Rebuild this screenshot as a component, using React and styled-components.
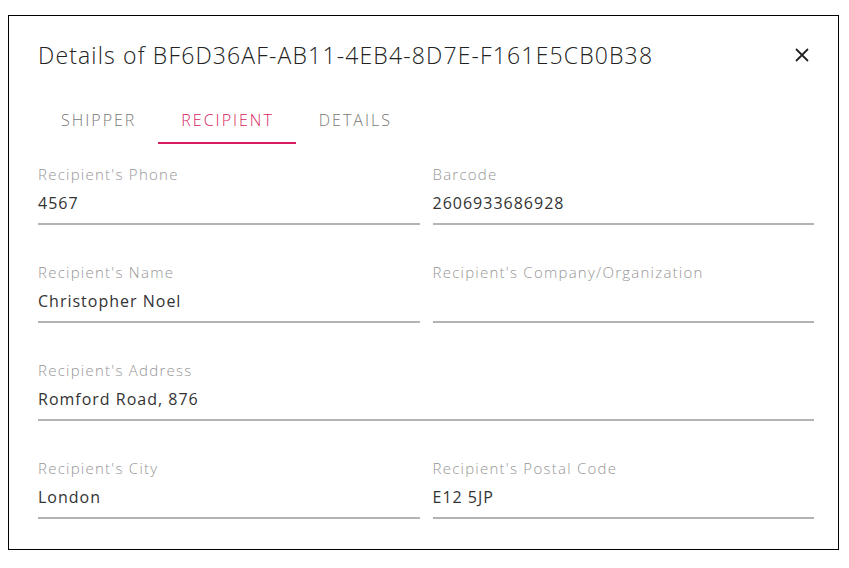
import React from "react";
import styled, { createGlobalStyle } from "styled-components";

const Global = createGlobalStyle`
  html, body { margin: 0; padding: 0; background: #fff; }
  body { padding: 15px 0 0 8px; font-family: "Open Sans", "Noto Sans", sans-serif; }
  * { box-sizing: border-box; }
`;

const Dialog = styled.div`
  width: 831px;
  height: 535px;
  border: 1px solid #000;
  background: #fff;
  padding: 21px 24px 0 29px;
  display: flex;
  flex-direction: column;
`;

const Header = styled.div`
  display: flex;
  align-items: center;
  justify-content: space-between;
  height: 36px;
`;

const Title = styled.h2`
  margin: 0;
  font-size: 23px;
  font-weight: 300;
  color: #222;
  letter-spacing: 1.15px;
`;

const Close = styled.button`
  border: 0;
  background: none;
  padding: 0;
  width: 14px;
  height: 14px;
  margin-right: 5px;
  display: flex;
  cursor: pointer;
`;

const TabBar = styled.div`
  display: flex;
  margin-top: 23px;
  height: 48px;
`;

const Tab = styled.div`
  position: relative;
  padding: 0 22px 0 23px;
  display: flex;
  align-items: center;
  font-size: 16px;
  font-weight: 300;
  letter-spacing: 2px;
  color: ${(p) => (p.$active ? "#d81b60" : "#777")};
  &::after {
    content: "";
    position: absolute;
    left: 0;
    right: 0;
    bottom: 0;
    height: 2px;
    background: ${(p) => (p.$active ? "#d81b60" : "transparent")};
  }
`;

const Grid = styled.div`
  margin-top: 21px;
  width: 776px;
  display: grid;
  grid-template-columns: 1fr 1fr;
  column-gap: 13px;
  row-gap: 38px;
`;

const Field = styled.div`
  grid-column: ${(p) => (p.$wide ? "1 / -1" : "auto")};
  border-bottom: 2px solid #b3b3b3;
  padding-bottom: 8px;
`;

const Label = styled.div`
  font-size: 15px;
  font-weight: 300;
  line-height: 18px;
  letter-spacing: 1.25px;
  color: #969696;
  margin-bottom: 8px;
`;

const Value = styled.div`
  font-size: 16px;
  font-weight: 400;
  line-height: 24px;
  height: 24px;
  letter-spacing: 1px;
  color: #333;
`;

const fields = [
  { label: "Recipient's Phone", value: "4567" },
  { label: "Barcode", value: "2606933686928" },
  { label: "Recipient's Name", value: "Christopher Noel" },
  { label: "Recipient's Company/Organization", value: "" },
  { label: "Recipient's Address", value: "Romford Road, 876", wide: true },
  { label: "Recipient's City", value: "London" },
  { label: "Recipient's Postal Code", value: "E12 5JP" },
];

export default function App() {
  return (
    <>
      <Global />
      <Dialog>
        <Header>
          <Title>Details of BF6D36AF-AB11-4EB4-8D7E-F161E5CB0B38</Title>
          <Close aria-label="close">
            <svg width="14" height="14" viewBox="0 0 14 14">
              <path d="M1 1L13 13M13 1L1 13" stroke="#222" strokeWidth="1.8" />
            </svg>
          </Close>
        </Header>
        <TabBar>
          <Tab>SHIPPER</Tab>
          <Tab $active>RECIPIENT</Tab>
          <Tab>DETAILS</Tab>
        </TabBar>
        <Grid>
          {fields.map((f) => (
            <Field key={f.label} $wide={f.wide}>
              <Label>{f.label}</Label>
              <Value>{f.value}</Value>
            </Field>
          ))}
        </Grid>
      </Dialog>
    </>
  );
}
